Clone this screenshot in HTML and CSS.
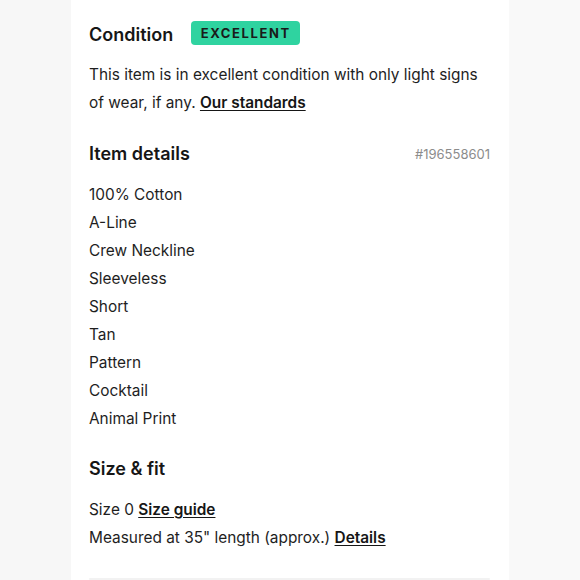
FILE: index.html
```html
<!DOCTYPE html>
<html>
<head>
<meta charset="utf-8">
<link rel="stylesheet" href="styles.css">
</head>
<body>
<div class="page">
  <div class="side"></div>
  <main class="panel">
    <section class="condition">
      <div class="cond-row">
        <h2 class="heading cond-title">Condition</h2>
        <span class="badge">EXCELLENT</span>
      </div>
      <p class="text">This item is in excellent condition with only light signs of wear, if any. <a class="link" href="#">Our standards</a></p>
    </section>
    <section class="details">
      <div class="details-head">
        <h2 class="heading">Item details</h2>
        <span class="item-id">#196558601</span>
      </div>
      <ul class="list">
        <li>100% Cotton</li>
        <li>A-Line</li>
        <li>Crew Neckline</li>
        <li>Sleeveless</li>
        <li>Short</li>
        <li>Tan</li>
        <li>Pattern</li>
        <li>Cocktail</li>
        <li>Animal Print</li>
      </ul>
    </section>
    <section class="size">
      <h2 class="heading">Size &amp; fit</h2>
      <div class="size-lines">
        <p class="line">Size 0 <a class="link" href="#">Size guide</a></p>
        <p class="line">Measured at 35" length (approx.) <a class="link" href="#">Details</a></p>
      </div>
    </section>
    <div class="gray-box"></div>
  </main>
  <div class="side right"></div>
</div>
</body>
</html>
```
FILE: styles.css
```css
html, body {
  margin: 0;
  padding: 0;
  background: #f7f7f7;
}
body {
  font-family: Inter, "Noto Sans", sans-serif;
  color: #1e1e1e;
  height: 580px;
  overflow: hidden;
}
.page {
  display: flex;
  height: 580px;
}
.side {
  width: 71px;
  flex: none;
  background: #f7f7f7;
}
.side.right {
  flex: 1;
  background: #f9f9f9;
}
.panel {
  width: 401px;
  flex: none;
  background: #fff;
  padding: 21px 19px 0 18px;
  display: flex;
  flex-direction: column;
}
.heading {
  margin: 0;
  font-size: 18px;
  font-weight: 600;
  line-height: 28px;
  color: #161616;
}
.cond-row {
  display: flex;
  align-items: center;
  height: 24px;
  gap: 18px;
}
.cond-title {
  margin-top: 3px;
}
.badge {
  display: inline-flex;
  align-items: center;
  justify-content: center;
  height: 24px;
  width: 109px;
  box-sizing: border-box;
  background: #2fd3a0;
  border-radius: 4px;
  font-size: 13px;
  font-weight: 700;
  letter-spacing: 1.6px;
  color: #1a1a1a;
}
.text {
  margin: 15px 0 0;
  padding-top: 1px;
  font-size: 15.4px;
  line-height: 28px;
}
.link {
  color: #161616;
  font-weight: 600;
  text-decoration: underline;
  text-underline-offset: 2px;
}
.details {
  margin-top: 23px;
}
.details-head {
  display: flex;
  justify-content: space-between;
  align-items: center;
}
.item-id {
  font-size: 13px;
  color: #8c8c8c;
}
.list {
  list-style: none;
  margin: 12px 0 0;
  padding: 1px 0 0;
  font-size: 15.4px;
  line-height: 28px;
}
.size {
  margin-top: 22px;
}
.size-lines {
  margin-top: 13px;
}
.line {
  margin: 0;
  font-size: 15.4px;
  line-height: 28px;
}
.gray-box {
  margin-top: 26px;
  height: 60px;
  background: #f2f2f2;
  border-radius: 4px;
}
```
